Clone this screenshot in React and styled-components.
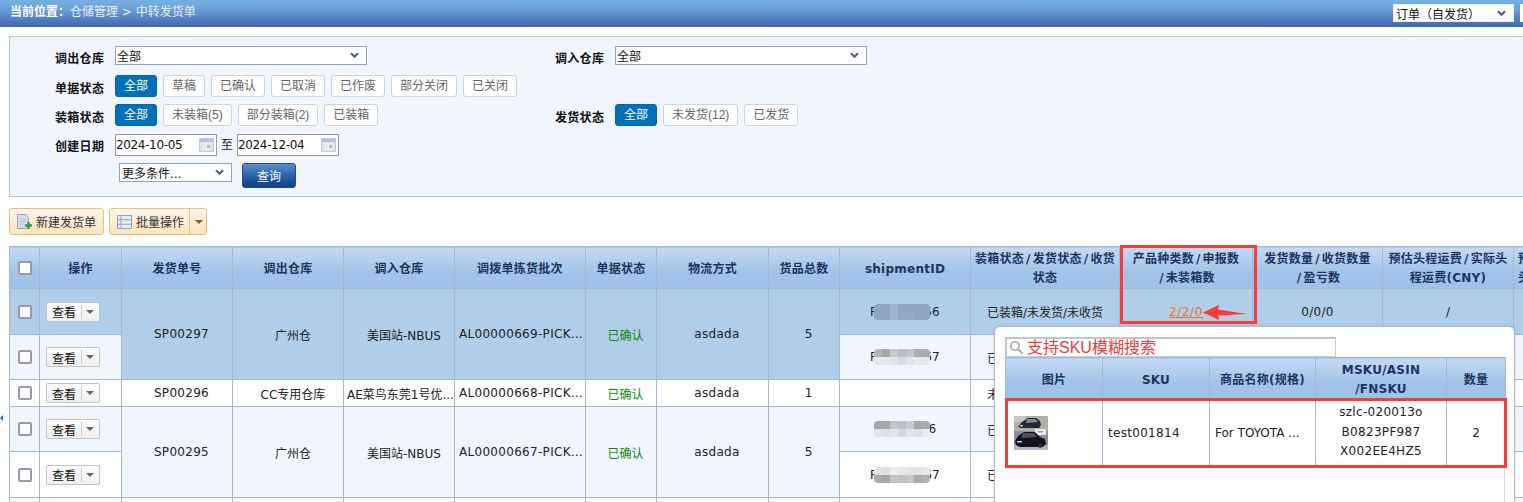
import React from "react";
import styled, { createGlobalStyle, css } from "styled-components";

/* ================= GLOBAL ================= */

const GlobalStyle = createGlobalStyle`
  html, body {
    margin: 0;
    padding: 0;
    background: #fff;
    overflow: hidden;
  }
  body {
    font-family: "DejaVu Sans", "Noto Sans CJK SC", sans-serif;
    font-size: 12px;
    color: #222;
  }
`;

const Page = styled.div`
  position: relative;
  width: 1523px;
  height: 502px;
  overflow: hidden;
`;

const SideMark = styled.div`
  position: absolute;
  left: 0;
  top: 415px;
  width: 0;
  height: 0;
  border-top: 3px solid transparent;
  border-bottom: 3px solid transparent;
  border-right: 3px solid #2a6db5;
`;

/* ================= TOP BAR ================= */

const TopBar = styled.div`
  height: 27px;
  display: flex;
  align-items: flex-start;
  padding: 4px 0 0 10px;
  box-sizing: border-box;
  background: linear-gradient(#76b0e3, #6b9fd6 35%, #3f66b0);
`;

const Crumb = styled.div`
  flex: 1;
  line-height: 17px;
  color: #e6f0fb;
  b {
    color: #fff;
  }
`;

const Select = styled.div`
  display: flex;
  align-items: center;
  justify-content: space-between;
  box-sizing: border-box;
  background: #fff;
  border: 1px solid ${(p) => p.$border || "#8ea3bd"};
  width: ${(p) => p.$w}px;
  height: ${(p) => p.$h || 19}px;
  padding: 0 7px 0 ${(p) => p.$pl || 1}px;
  color: #111;
  flex-shrink: 0;
`;

const Stub = styled.div`
  width: 3px;
  height: 18px;
  margin-left: 6px;
  background: #fff;
`;

const Chevron = () => (
  <svg width="9" height="7" viewBox="0 0 9 7">
    <path d="M1 1.2 4.5 4.8 8 1.2" fill="none" stroke="#4a5f80" strokeWidth="2" />
  </svg>
);

/* ================= FILTER PANEL ================= */

const Panel = styled.div`
  margin: 9px 0 0 9px;
  height: 161px;
  box-sizing: border-box;
  padding: 9px 0 0 45px;
  background: #f0f5fe;
  border: 1px solid #b9c9dc;
  border-right: 0;
`;

const Row = styled.div`
  display: flex;
  height: ${(p) => p.$h}px;
`;

const Field = styled.div`
  display: flex;
  width: 500px;
`;

const Label = styled.div`
  width: 60px;
  flex-shrink: 0;
  font-weight: bold;
  letter-spacing: 0.3px;
  line-height: 18px;
  margin-top: ${(p) => p.$top || 4}px;
  color: #111;
`;

const Chips = styled.div`
  display: flex;
  gap: 6px;
`;

const Chip = styled.div`
  height: 22px;
  line-height: 20px;
  box-sizing: border-box;
  padding: 0 8px;
  border: 1px solid #ccd6e0;
  border-radius: 3px;
  background: #fff;
  color: #666;
  font-family: "Liberation Sans", "Noto Sans CJK SC", sans-serif;
  white-space: nowrap;
  ${(p) =>
    p.$on &&
    css`
      background: #0070b8;
      border-color: #0068ad;
      color: #fff;
    `}
`;

const DateBox = styled.div`
  width: 102px;
  height: 22px;
  box-sizing: border-box;
  border: 1px solid #999;
  background: #fff;
  display: flex;
  align-items: center;
  justify-content: space-between;
  padding: 0 2px 0 0;
  color: #111;
  letter-spacing: -0.35px;
`;

const DateGap = styled.span`
  width: 20px;
  text-align: center;
  line-height: 22px;
`;

const Calendar = () => (
  <svg width="15" height="14" viewBox="0 0 15 14">
    <rect x="0.5" y="0.5" width="14" height="13" fill="#dbe3ee" stroke="#c0cad8" />
    <rect x="1" y="1" width="13" height="3" fill="#b4c3d8" />
    <path d="M3 5.5h9M3 8h9M3 10.5h9M5 5v7M7.5 5v7M10 5v7" stroke="#f4f6fa" strokeWidth="0.8" />
    <rect x="8" y="7" width="3" height="3" fill="#e8a898" />
  </svg>
);

const QueryButton = styled.button`
  width: 54px;
  height: 25px;
  margin-left: 10px;
  padding: 0;
  font: inherit;
  color: #fff;
  border: 1px solid #1d4d90;
  border-radius: 3px;
  background: linear-gradient(#5a8fd0, #2a5ea8 55%, #0e3d84);
`;

const MoreWrap = styled.div`
  display: flex;
  padding-left: 64px;
`;

/* ================= TOOLBAR ================= */

const Toolbar = styled.div`
  display: flex;
  gap: 5px;
  margin: 11px 0 11px 9px;
`;

const ToolButton = styled.div`
  display: flex;
  align-items: center;
  height: 27px;
  box-sizing: border-box;
  width: ${(p) => p.$w}px;
  padding-left: ${(p) => p.$pl}px;
  border: 1px solid #e9c078;
  border-radius: 3px;
  background: linear-gradient(#fdf6ea, #fbe3bd);
  color: #333;
  gap: ${(p) => p.$gap}px;
  white-space: nowrap;
`;

const Splitter = styled.span`
  display: flex;
  align-items: center;
  margin-left: 1px;
  height: 25px;
  padding-left: 5px;
  border-left: 1px solid #e9c078;
`;

const DownArrow = styled.span`
  width: 0;
  height: 0;
  border-left: 4px solid transparent;
  border-right: 4px solid transparent;
  border-top: 4px solid ${(p) => p.$c || "#8a5a2a"};
`;

const NewDocIcon = () => (
  <svg width="17" height="16" viewBox="0 0 17 16">
    <path d="M1.5 .5h8l3 3v11h-11z" fill="#d8dfea" stroke="#9aa8bc" />
    <path d="M3 5h7M3 7.5h7M3 10h5" stroke="#b3bfd0" />
    <path d="M9 11.5h7M12.5 8v7" stroke="#2f9e3f" strokeWidth="2.4" />
  </svg>
);

const ListIcon = () => (
  <svg width="15" height="14" viewBox="0 0 15 14">
    <rect x="0.5" y="0.5" width="14" height="13" fill="#e8eef6" stroke="#8fa4c0" />
    <path d="M.5 4.8h14M.5 9.2h14M4 .5v13" stroke="#8fa4c0" />
  </svg>
);

/* ================= TABLES ================= */

const OrderTableWrap = styled.div`
  margin-left: 9px;
`;

const Grid = styled.table`
  border-collapse: collapse;
  table-layout: fixed;
  width: ${(p) => p.$w}px;
`;

const Th = styled.th`
  border: 1px solid #a2b9d4;
  background: linear-gradient(#c3daf4, #a2c3e9 60%, #a0c1e8);
  color: #1b3460;
  font-weight: bold;
  letter-spacing: 0.25px;
  line-height: 19px;
  height: 38px;
  padding: 3px 0 0 ${(p) => p.$pl || 0}px;
  text-align: ${(p) => p.$align || "center"};
  white-space: nowrap;
  overflow: hidden;
`;

const Slash = styled.span`
  padding: 0 2px;
`;

const Tr = styled.tr`
  background: ${(p) => p.$bg || "#fff"};
  height: ${(p) => p.$h}px;
`;

const Td = styled.td`
  border: 1px solid #a2b9d4;
  padding: 0 0 0 ${(p) => p.$pl || 0}px;
  background: ${(p) => p.$bg || "transparent"};
  text-align: ${(p) => p.$align || "center"};
  color: ${(p) => p.$c || "#222"};
  letter-spacing: ${(p) => (p.$latin ? "0.3px" : "0")};
  white-space: nowrap;
  overflow: hidden;
  text-overflow: ellipsis;
`;

const Check = styled.span`
  display: block;
  width: 14px;
  height: 14px;
  margin: ${(p) => (p.$head ? "-3px" : "0")} auto 0;
  box-sizing: border-box;
  border: 2px solid #9a98ab;
  border-radius: 2px;
  background: #fff;
`;

const ViewButton = styled.div`
  display: flex;
  align-items: center;
  width: 54px;
  height: 20px;
  margin: 0 auto 0 6px;
  box-sizing: border-box;
  border: 1px solid #c4c4c4;
  border-radius: 2px;
  background: linear-gradient(#fff, #f0f0f0);
  color: #111;
  padding-left: 5px;
`;

const ViewArrow = styled.span`
  display: flex;
  align-items: center;
  margin-left: 5px;
  height: 14px;
  padding-left: 4px;
  border-left: 1px solid #ccc;
`;

const OrangeLink = styled.a`
  color: #e8761c;
  text-decoration: underline;
  letter-spacing: 0.6px;
`;

/* redacted shipment id */
const Redacted = styled.span`
  display: inline-flex;
  align-items: center;
  letter-spacing: 0.3px;
`;

const Mosaic = styled.span`
  position: relative;
  display: inline-grid;
  grid-template-columns: repeat(7, 8px);
  grid-auto-rows: 8px;
  margin: 0 ${(p) => p.$right}px 0 ${(p) => p.$left}px;
  border-radius: 4px;
  overflow: hidden;
`;

const Pixel = styled.span`
  background: ${(p) => p.$c};
`;

const Shipment = ({ tail, colors, left = -3, right = -6 }) => (
  <Redacted>
    F
    <Mosaic $left={left} $right={right}>
      {colors.map((c, i) => (
        <Pixel key={i} $c={c} />
      ))}
    </Mosaic>
    {tail}
  </Redacted>
);

const mosaicA = ["#8ea5bf", "#8ea5bf", "#a0b6d0", "#8fa6c2", "#8fa6c2", "#8ea5bf", "#8ea5bf", "#8ea5bf", "#8ea5bf", "#a0b6d0", "#93aac6", "#93aac6", "#8ea5bf", "#8ea5bf"];
const mosaicB = ["#b4b4b8", "#a8a8ac", "#c8c8c4", "#bcbcc4", "#c4c4cc", "#acacb0", "#acacb0", "#e4e8f0", "#e4e8f0", "#e0e4ec", "#d8dae2", "#e0e4ec", "#e8ecf2", "#e4e8f0"];
const mosaicC = ["#a8a8ac", "#a8a8ac", "#c4c4c4", "#bcc0cc", "#c8ccd4", "#a8a8ac", "#a8aaae", "#e0e4ec", "#dce0e8", "#e0e4ec", "#d4d8e0", "#e0e4ec", "#dce0e4", "#e8ecf2"];
const mosaicD = ["#e4e4e4", "#e0e0e0", "#eceeee", "#e8e8ea", "#e4e4e6", "#e4e4e4", "#e8e8e8", "#acacb0", "#a8a8ac", "#c8c4c0", "#c0c0c8", "#c8c8cc", "#acacb0", "#b4b4b4"];

const hover = "#b0cde9";
const soft = "#f1f5fd";

const columns = [30, 82, 111, 111, 111, 131, 71, 112, 71, 131, 149, 133, 130, 131, 130];

const groups = [
  {
    no: "SP00297",
    from: "广州仓",
    to: "美国站-NBUS",
    batch: "AL00000669-PICK00012",
    total: 5,
    bg: hover,
    rows: [
      { h: 46, bg: hover, ship: <Shipment tail="56" colors={mosaicA} />, state: "已装箱/未发货/未收货", link: true, qty: "0/0/0" },
      { h: 45, bg: soft, ship: <Shipment tail="67" colors={mosaicB} />, state: "已装箱/未发货/未收货", qty: "" },
    ],
  },
  {
    no: "SP00296",
    from: "CC专用仓库",
    to: "AE菜鸟东莞1号优...",
    batch: "AL00000668-PICK00011",
    total: 1,
    bg: "#fff",
    rows: [{ h: 27, bg: "#fff", state: "未装箱/未发货/未收货", qty: "" }],
  },
  {
    no: "SP00295",
    from: "广州仓",
    to: "美国站-NBUS",
    batch: "AL00000667-PICK00010",
    total: 5,
    bg: "#f0f5fe",
    rows: [
      { h: 45, bg: "#f0f5fe", ship: <Shipment tail="56" left={-7} right={-9} colors={mosaicC} />, state: "已装箱/未发货/未收货", qty: "" },
      { h: 46, bg: "#fff", ship: <Shipment tail="67" colors={mosaicD} />, state: "已装箱/未发货/未收货", qty: "" },
    ],
  },
  {
    no: "SP00294",
    from: "广州仓",
    to: "美国站-NBUS",
    batch: "AL00000666-PICK00009",
    total: 5,
    bg: "#fff",
    rows: [{ h: 60, bg: "#fff", state: "", qty: "" }],
  },
];

const ActionCell = () => (
  <ViewButton>
    查看
    <ViewArrow>
      <DownArrow $c="#666" />
    </ViewArrow>
  </ViewButton>
);

function OrderTable() {
  return (
    <Grid $w={1634}>
      <colgroup>
        {columns.map((w, i) => (
          <col key={i} style={{ width: w }} />
        ))}
      </colgroup>
      <thead>
        <tr>
          <Th>
            <Check $head />
          </Th>
          <Th>操作</Th>
          <Th>发货单号</Th>
          <Th>调出仓库</Th>
          <Th>调入仓库</Th>
          <Th>调拨单拣货批次</Th>
          <Th>单据状态</Th>
          <Th>物流方式</Th>
          <Th>货品总数</Th>
          <Th>shipmentID</Th>
          <Th>
            装箱状态<Slash>/</Slash>发货状态<Slash>/</Slash>收货
            <br />
            状态
          </Th>
          <Th>
            产品种类数<Slash>/</Slash>申报数
            <br />
            <Slash>/</Slash>未装箱数
          </Th>
          <Th>
            发货数量<Slash>/</Slash>收货数量
            <br />
            <Slash>/</Slash>盈亏数
          </Th>
          <Th>
            预估头程运费<Slash>/</Slash>实际头
            <br />
            程运费(CNY)
          </Th>
          <Th $align="left" $pl={4}>
            预估头程重量<Slash>/</Slash>实际
            <br />
            头程重量
          </Th>
        </tr>
      </thead>
      <tbody>
        {groups.map((g) =>
          g.rows.map((r, i) => (
            <Tr key={g.no + i} $bg={r.bg} $h={r.h}>
              <Td>
                <Check />
              </Td>
              <Td>
                <ActionCell />
              </Td>
              {i === 0 && (
                <>
                  <Td rowSpan={g.rows.length} $bg={g.bg} $pl={9} $latin>
                    {g.no}
                  </Td>
                  <Td rowSpan={g.rows.length} $bg={g.bg} $pl={10}>
                    {g.from}
                  </Td>
                  <Td rowSpan={g.rows.length} $bg={g.bg} $pl={g.to.length > 10 ? 3 : 10}>
                    {g.to}
                  </Td>
                  <Td rowSpan={g.rows.length} $bg={g.bg} $pl={4} $latin>
                    {g.batch}
                  </Td>
                  <Td rowSpan={g.rows.length} $bg={g.bg} $pl={9} $c="#0a8a0a">
                    已确认
                  </Td>
                  <Td rowSpan={g.rows.length} $bg={g.bg} $pl={9} $latin>
                    asdada
                  </Td>
                  <Td rowSpan={g.rows.length} $bg={g.bg} $pl={9}>
                    {g.total}
                  </Td>
                </>
              )}
              <Td>{r.ship}</Td>
              <Td>{r.state}</Td>
              <Td>{r.link && <OrangeLink>2/2/0</OrangeLink>}</Td>
              <Td $latin>{r.qty}</Td>
              <Td>{r.link ? "/" : ""}</Td>
              <Td />
            </Tr>
          ))
        )}
      </tbody>
    </Grid>
  );
}

/* ================= POPUP ================= */

const Popup = styled.div`
  position: absolute;
  left: 994px;
  top: 326px;
  width: 521px;
  height: 200px;
  box-sizing: border-box;
  padding: 10px 0 0 10px;
  background: #fff;
  border: 1px solid #bbb;
  border-radius: 6px 6px 0 0;
  box-shadow: 0 0 3px rgba(0, 0, 0, 0.15);
`;

const SearchBox = styled.div`
  width: 331px;
  height: 20px;
  box-sizing: border-box;
  display: flex;
  align-items: center;
  gap: 3px;
  padding-left: 2px;
  border: 1px solid #ccc;
  border-top: 2px solid #c4c4c4;
  border-left: 2px solid #c4c4c4;
  color: #f33a3a;
  font-size: 16px;
  line-height: 18px;
  font-family: "Liberation Sans", "Noto Sans CJK SC", sans-serif;
`;

const PopTableWrap = styled.div`
  width: 500px;
  height: 170px;
  box-sizing: border-box;
  border-right: 1px solid #d4dcec;
`;

const CodeLines = styled.div`
  line-height: 19.5px;
`;

const Annotation = styled.div`
  position: absolute;
  left: ${(p) => p.$x}px;
  top: ${(p) => p.$y}px;
  width: ${(p) => p.$w}px;
  height: ${(p) => p.$h}px;
  box-sizing: border-box;
  border: 3px solid #f73b3b;
  pointer-events: none;
`;

const ArrowMark = styled.svg`
  position: absolute;
  left: 1203px;
  top: 305px;
`;

const Thumb = styled.svg`
  display: block;
  margin-left: 8px;
  filter: blur(0.35px);
`;

const CarThumb = () => (
  <Thumb width="34" height="34" viewBox="0 0 34 34">
    <rect width="34" height="34" fill="#cfcdd8" />
    <rect width="34" height="15" fill="#aeb2a6" />
    <rect width="12" height="6" fill="#c8c8c0" />
    <rect y="15" width="34" height="19" fill="#8e8ba8" />
    <rect y="29" width="34" height="5" fill="#b6b2cc" />
    {/* rear car */}
    <path d="M4 11 8 6l6-4h8l4 3 1 4-2 3H7z" fill="#23272e" />
    <path d="M13 3h8l3 3-12 1z" fill="#7f8c99" />
    <rect x="6" y="9" width="3" height="1.5" fill="#c9ced6" />
    {/* sign */}
    <rect x="21" y="13" width="11" height="6" fill="#eeeef0" />
    <rect x="24" y="15" width="5" height="1.5" fill="#9a9aa4" />
    {/* front car */}
    <path d="M1 25l3-5 6-4h11l5 5 5 2 1 5-3 3H6l-4-2z" fill="#14131c" />
    <path d="M9 17h11l3 4-16 1z" fill="#4c4f68" />
    <rect x="3" y="25" width="5" height="1.5" fill="#d4d4e0" />
    <circle cx="26" cy="30" r="2" fill="#34323f" />
  </Thumb>
);

function PopupPanel() {
  return (
    <Popup>
      <SearchBox>
        <svg width="15" height="15" viewBox="0 0 15 15">
          <circle cx="6" cy="6" r="4.2" fill="none" stroke="#b4b4b4" strokeWidth="2" />
          <path d="M9.5 9.5 13.5 13.5" stroke="#b4b4b4" strokeWidth="2.4" />
        </svg>
        支持SKU模糊搜索
      </SearchBox>
      <PopTableWrap>
        <Grid $w={500}>
          <colgroup>
            {[97, 107, 106, 131, 59].map((w, i) => (
              <col key={i} style={{ width: w }} />
            ))}
          </colgroup>
          <thead>
            <tr>
              <Th>图片</Th>
              <Th>SKU</Th>
              <Th>商品名称(规格)</Th>
              <Th>
                MSKU/ASIN
                <br />
                /FNSKU
              </Th>
              <Th>数量</Th>
            </tr>
          </thead>
          <tbody>
            <Tr $h={66}>
              <Td $align="left">
                <CarThumb />
              </Td>
              <Td $align="left" $pl={5} $latin>
                test001814
              </Td>
              <Td $align="left" $pl={5}>
                For TOYOTA ...
              </Td>
              <Td $latin>
                <CodeLines>
                  szlc-020013o
                  <br />
                  B0823PF987
                  <br />
                  X002EE4HZ5
                </CodeLines>
              </Td>
              <Td>2</Td>
            </Tr>
          </tbody>
        </Grid>
      </PopTableWrap>
    </Popup>
  );
}

/* ================= COMPONENT ================= */

const docStates = ["草稿", "已确认", "已取消", "已作废", "部分关闭", "已关闭"];
const packStates = ["未装箱(5)", "部分装箱(2)", "已装箱"];
const shipStates = ["未发货(12)", "已发货"];

const ChipGroup = ({ items }) => (
  <Chips>
    <Chip $on>全部</Chip>
    {items.map((t) => (
      <Chip key={t}>{t}</Chip>
    ))}
  </Chips>
);

export default function App() {
  return (
    <Page>
      <GlobalStyle />
      <TopBar>
        <Crumb>
          <b>当前位置：</b>仓储管理 &gt; 中转发货单
        </Crumb>
        <Select $w={121} $h={18} $border="#e8eef6" $pl={2}>
          订单（自发货）
          <Chevron />
        </Select>
        <Stub />
      </TopBar>

      <Panel>
        <Row $h={29}>
          <Field>
            <Label>调出仓库</Label>
            <Select $w={252}>
              全部
              <Chevron />
            </Select>
          </Field>
          <Field>
            <Label>调入仓库</Label>
            <Select $w={252}>
              全部
              <Chevron />
            </Select>
          </Field>
        </Row>
        <Row $h={29}>
          <Field>
            <Label $top={5}>单据状态</Label>
            <ChipGroup items={docStates} />
          </Field>
        </Row>
        <Row $h={30}>
          <Field>
            <Label $top={5}>装箱状态</Label>
            <ChipGroup items={packStates} />
          </Field>
          <Field>
            <Label $top={5}>发货状态</Label>
            <ChipGroup items={shipStates} />
          </Field>
        </Row>
        <Row $h={29}>
          <Field>
            <Label>创建日期</Label>
            <DateBox>
              2024-10-05
              <Calendar />
            </DateBox>
            <DateGap>至</DateGap>
            <DateBox>
              2024-12-04
              <Calendar />
            </DateBox>
          </Field>
        </Row>
        <Row $h={25}>
          <MoreWrap>
            <Select $w={113} $pl={2}>
              更多条件...
              <Chevron />
            </Select>
            <QueryButton>查询</QueryButton>
          </MoreWrap>
        </Row>
      </Panel>

      <Toolbar>
        <ToolButton $w={95} $pl={6} $gap={3}>
          <NewDocIcon />
          新建发货单
        </ToolButton>
        <ToolButton $w={98} $pl={7} $gap={4}>
          <ListIcon />
          <span>批量操作</span>
          <Splitter>
            <DownArrow />
          </Splitter>
        </ToolButton>
      </Toolbar>

      <OrderTableWrap>
        <OrderTable />
      </OrderTableWrap>

      <PopupPanel />
      <SideMark />

      <Annotation $x={1120} $y={245} $w={137} $h={79} />
      <ArrowMark width="46" height="16" viewBox="0 0 46 16">
        <path d="M0 7.5 16 0 15 4.5 44 9 15 10.5 16 15z" fill="#f73b3b" />
      </ArrowMark>
      <Annotation $x={1005} $y={398} $w={502} $h={70} />
    </Page>
  );
}
